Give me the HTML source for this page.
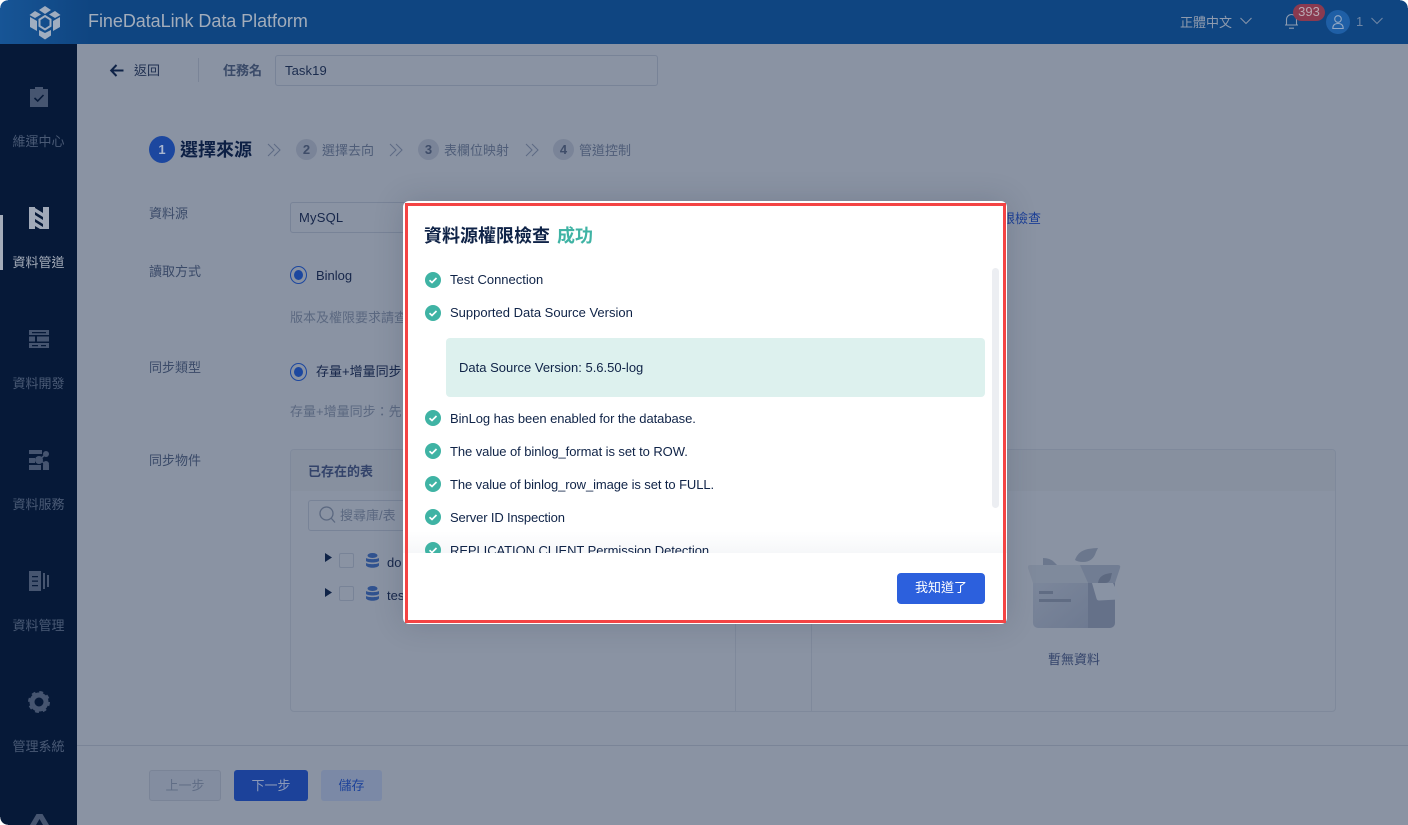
<!DOCTYPE html>
<html lang="zh-Hant">
<head>
<meta charset="utf-8">
<title>FineDataLink</title>
<style>
html,body{margin:0;padding:0;background:#fff;}
#r{position:relative;width:1408px;height:825px;overflow:hidden;background:#8a93a3;font-family:"Liberation Sans","WenQuanYi Zen Hei","Noto Sans CJK TC",sans-serif;font-size:13px;color:#0f2347;}
.t{position:absolute;white-space:nowrap;line-height:20px;margin-top:1px;}
.b{position:absolute;box-sizing:border-box;}
svg{position:absolute;overflow:visible;}
.nav{color:#4a5a75;left:0;width:77px;text-align:center;}
.lab{color:#3a4a68;left:149px;}
.hint{color:#5b6880;}
.li{left:450px;color:#0f2347;}
</style>
</head>
<body>
<div id="r">
  <!-- header -->
  <div class="b" style="left:0;top:0;width:1408px;height:44px;background:linear-gradient(90deg,#175596 0,#0f4581 90px,#0f4581 100%);"></div>
  <svg style="left:24px;top:2px" width="42" height="40" viewBox="24 2 42 40">
    <g fill="#a0adbf">
      <polygon points="45,6 51,10 45,14 39,10"/>
      <polygon points="35,11 41,14.500 35,18 29.500,15"/>
      <polygon points="55,11 60.500,15 55,18 49,14.500"/>
      <polygon points="30,17 37,21 37,31 30,27"/>
      <polygon points="60,17 60,27 53,31 53,21"/>
      <polygon points="39,30 45,33 51,30 51,35.500 45,39.500 39,35.500"/>
    </g>
    <polygon points="45,16 50.500,19.500 50.500,26 45,29.500 39.500,26 39.500,19.500" fill="none" stroke="#a0adbf" stroke-width="2"/>
  </svg>
  <div class="t" style="left:88px;top:10px;font-size:18px;color:#a3adbb;letter-spacing:-.05px;">FineDataLink Data Platform</div>
  <div class="t" style="left:1180px;top:12px;color:#8f9bae;">正體中文</div>
  <svg style="left:1240px;top:17px" width="12" height="8"><path d="M.5 1 6 6.500 11.500 1" fill="none" stroke="#8493a8" stroke-width="1.100"/></svg>
  <svg style="left:1284px;top:13px" width="15" height="16"><path d="M1 12h13M2.500 12V6.500a5 5 0 0 1 10 0V12M5 15.200h5" fill="none" stroke="#8d9bb0" stroke-width="1.100"/></svg>
  <div class="b" style="left:1293px;top:4px;width:32px;height:17px;border-radius:9px;background:#8a3a50;"></div>
  <div class="t" style="left:1293px;top:2px;width:32px;text-align:center;color:#b9a9b3;font-size:13px;line-height:18px;">393</div>
  <div class="b" style="left:1326px;top:10px;width:24px;height:24px;border-radius:50%;background:#1f5fa6;"></div>
  <svg style="left:1332px;top:15px" width="12" height="15"><circle cx="6" cy="4" r="3.300" fill="none" stroke="#93a8c4" stroke-width="1.100"/><path d="M.8 13.500c0-3.500 2-5 5.200-5s5.200 1.500 5.200 5z" fill="none" stroke="#93a8c4" stroke-width="1.100"/></svg>
  <div class="t" style="left:1356px;top:11px;color:#6f86a5;">1</div>
  <svg style="left:1371px;top:17px" width="12" height="8"><path d="M.5 1 6 6.500 11.500 1" fill="none" stroke="#6f86a5" stroke-width="1.100"/></svg>

  <!-- sidebar -->
  <div class="b" style="left:0;top:44px;width:77px;height:781px;background:#061938;"></div>
  <div class="b" style="left:0;top:215px;width:3px;height:55px;background:#a4acb9;"></div>

  <svg style="left:30px;top:87px" width="18" height="20"><path d="M0 2h5V0h8v2h5v18H0z" fill="#465570"/><path d="M4.500 11l3.200 3L13.500 8" fill="none" stroke="#061938" stroke-width="1.600"/></svg>
  <div class="t nav" style="top:131px;">維運中心</div>

  <svg style="left:29px;top:207px" width="20" height="22"><path d="M0 0h6v22H0zM14 0h6v22h-6z" fill="#a0a9b8"/><path d="M6 1l8 5v4L6 5zM6 8l8 5v4L6 12zM6 15l8 5v2h-3l-5-3z" fill="#a0a9b8"/></svg>
  <div class="t nav" style="top:252px;color:#a4acb9;">資料管道</div>

  <svg style="left:29px;top:330px" width="20" height="18" fill="#465570"><path d="M0 0h20v5H0zM0 6.500h6v5H0zM8 6.500h12v5H8zM0 13h20v5H0z"/><path d="M3 2h14v1.200H3zM3 15h6v1.200H3zM12 15h5v1.200h-5z" fill="#061938"/></svg>
  <div class="t nav" style="top:373px;">資料開發</div>

  <svg style="left:29px;top:450px" width="20" height="20" fill="#465570"><path d="M0 0h13v4H0zM0 8h6v5H0zM0 15h12v5H0zM14 15h6v5h-6z"/><circle cx="10" cy="10" r="4"/><circle cx="17" cy="4" r="3"/><circle cx="17" cy="14" r="3"/><path d="M10 10 17 4M10 10l7 4" stroke="#465570" stroke-width="1.500"/></svg>
  <div class="t nav" style="top:494px;">資料服務</div>

  <svg style="left:29px;top:571px" width="20" height="20" fill="#465570"><path d="M0 0h12v20H0zM14 2h2v16h-2zM18 4h2v12h-2z"/><path d="M3 5h6v1.300H3zM3 9.500h6v1.300H3zM3 14h6v1.300H3z" fill="#061938"/></svg>
  <div class="t nav" style="top:615px;">資料管理</div>

  <svg style="left:28px;top:691px" width="22" height="22"><circle cx="11" cy="11" r="7" fill="none" stroke="#465570" stroke-width="5"/><circle cx="11" cy="11" r="9" fill="none" stroke="#465570" stroke-width="4" stroke-dasharray="3.500 3.570"/></svg>
  <div class="t nav" style="top:736px;">管理系統</div>

  <svg style="left:30px;top:814px" width="19" height="11"><path d="M6.500 0h6l6.500 11h-6L9.500 5 6 11H0z" fill="#465570"/></svg>
  <div class="b" style="left:0;top:817px;width:8px;height:8px;background:radial-gradient(circle at 100% 0,transparent 7.500px,#fff 8px);"></div>
  <div class="b" style="left:0;top:0;width:8px;height:8px;background:radial-gradient(circle at 100% 100%,transparent 7.500px,#fff 8px);"></div>
  <div class="b" style="left:1400px;top:0;width:8px;height:8px;background:radial-gradient(circle at 0 100%,transparent 7.500px,#fff 8px);"></div>

  <!-- top bar -->
  <svg style="left:110px;top:64px" width="14" height="13"><path d="M13.500 6.500H1.500M6.500 1 1.200 6.500 6.500 12" fill="none" stroke="#0f2347" stroke-width="2"/></svg>
  <div class="t" style="left:134px;top:60px;color:#1f2f50;">返回</div>
  <div class="b" style="left:198px;top:58px;width:1px;height:24px;background:#7a8497;"></div>
  <div class="t" style="left:223px;top:60px;color:#3a4a68;font-weight:bold;">任務名</div>
  <div class="b" style="left:275px;top:55px;width:383px;height:31px;border:1px solid #788397;border-radius:3px;"></div>
  <div class="t" style="left:285px;top:60px;color:#1a2b4d;letter-spacing:.1px;">Task19</div>

  <!-- steps -->
  <div class="b" style="left:149px;top:136px;width:26px;height:27px;border-radius:50%;background:#1c479f;"></div>
  <div class="t" style="left:149px;top:139px;width:26px;text-align:center;color:#a9b6cf;font-weight:bold;font-size:13px;">1</div>
  <div class="t" style="left:180px;top:139px;font-size:18px;font-weight:bold;color:#0c1f44;">選擇來源</div>
  <svg style="left:267px;top:143px" width="14" height="14"><path d="M1 1l6 6-6 6M7 1l6 6-6 6" fill="none" stroke="#5d6a84" stroke-width="1"/></svg>
  <div class="b" style="left:296px;top:139px;width:21px;height:21px;border-radius:50%;background:#7a8498;"></div>
  <div class="t" style="left:296px;top:139px;width:21px;text-align:center;color:#3f4d69;font-weight:bold;">2</div>
  <div class="t" style="left:322px;top:140px;color:#4f5d78;">選擇去向</div>
  <svg style="left:389px;top:143px" width="14" height="14"><path d="M1 1l6 6-6 6M7 1l6 6-6 6" fill="none" stroke="#5d6a84" stroke-width="1"/></svg>
  <div class="b" style="left:418px;top:139px;width:21px;height:21px;border-radius:50%;background:#7a8498;"></div>
  <div class="t" style="left:418px;top:139px;width:21px;text-align:center;color:#3f4d69;font-weight:bold;">3</div>
  <div class="t" style="left:444px;top:140px;color:#4f5d78;">表欄位映射</div>
  <svg style="left:525px;top:143px" width="14" height="14"><path d="M1 1l6 6-6 6M7 1l6 6-6 6" fill="none" stroke="#5d6a84" stroke-width="1"/></svg>
  <div class="b" style="left:553px;top:139px;width:21px;height:21px;border-radius:50%;background:#7a8498;"></div>
  <div class="t" style="left:553px;top:139px;width:21px;text-align:center;color:#3f4d69;font-weight:bold;">4</div>
  <div class="t" style="left:579px;top:140px;color:#4f5d78;">管道控制</div>

  <!-- form -->
  <div class="t lab" style="top:203px;">資料源</div>
  <div class="b" style="left:290px;top:202px;width:160px;height:31px;border:1px solid #788397;border-radius:3px;"></div>
  <div class="t" style="left:299px;top:207px;color:#16264a;letter-spacing:.2px;">MySQL</div>
  <div class="t" style="left:1002px;top:208px;color:#1c3f96;">限檢查</div>

  <div class="t lab" style="top:261px;">讀取方式</div>
  <div class="b" style="left:290px;top:266px;width:17px;height:18px;border-radius:50%;border:1px solid #1c479f;"></div>
  <div class="b" style="left:294px;top:270px;width:9px;height:10px;border-radius:50%;background:#1c479f;"></div>
  <div class="t" style="left:316px;top:265px;color:#16264a;">Binlog</div>
  <div class="t hint" style="left:290px;top:307px;">版本及權限要求請查</div>

  <div class="t lab" style="top:357px;">同步類型</div>
  <div class="b" style="left:290px;top:363px;width:17px;height:18px;border-radius:50%;border:1px solid #1c479f;"></div>
  <div class="b" style="left:294px;top:367px;width:9px;height:10px;border-radius:50%;background:#1c479f;"></div>
  <div class="t" style="left:316px;top:361px;color:#16264a;">存量+增量同步</div>
  <div class="t hint" style="left:290px;top:401px;">存量+增量同步：先</div>

  <div class="t lab" style="top:450px;">同步物件</div>

  <!-- panels -->
  <div class="b" style="left:290px;top:449px;width:1046px;height:263px;border:1px solid #7f899b;border-radius:4px;"></div>
  <div class="b" style="left:291px;top:450px;width:444px;height:41px;background:#87909f;border-radius:3px 0 0 0;"></div>
  <div class="b" style="left:812px;top:450px;width:523px;height:41px;background:#87909f;border-radius:0 3px 0 0;"></div>
  <div class="b" style="left:735px;top:449px;width:1px;height:263px;background:#7f899b;"></div>
  <div class="b" style="left:811px;top:449px;width:1px;height:263px;background:#7f899b;"></div>
  <div class="t" style="left:308px;top:461px;color:#33436a;font-weight:bold;">已存在的表</div>
  <div class="b" style="left:308px;top:500px;width:120px;height:31px;border:1px solid #788397;border-radius:3px;"></div>
  <svg style="left:319px;top:506px" width="17" height="18"><circle cx="7.500" cy="7.500" r="6.500" fill="none" stroke="#5b6880" stroke-width="1.300"/><path d="M12 12l4 4.500" stroke="#5b6880" stroke-width="1.300"/></svg>
  <div class="t hint" style="left:340px;top:505px;">搜尋庫/表</div>

  <svg style="left:325px;top:553px" width="7" height="9"><path d="M0 0l7 4.500L0 9z" fill="#0f2347"/></svg>
  <div class="b" style="left:339px;top:553px;width:15px;height:15px;border:1px solid #788397;border-radius:2px;"></div>
  <svg style="left:366px;top:553px" width="13" height="15" fill="#30528f"><ellipse cx="6.500" cy="2.500" rx="5" ry="2.500"/><path d="M0 5c2 1.500 11 1.500 13 0v3c-2 2-11 2-13 0zM0 10c2 1.500 11 1.500 13 0v2.500c-2 3-11 3-13 0z"/></svg>
  <div class="t" style="left:387px;top:552px;color:#16264a;">do</div>

  <svg style="left:325px;top:588px" width="7" height="9"><path d="M0 0l7 4.500L0 9z" fill="#0f2347"/></svg>
  <div class="b" style="left:339px;top:586px;width:15px;height:15px;border:1px solid #788397;border-radius:2px;"></div>
  <svg style="left:366px;top:586px" width="13" height="15" fill="#30528f"><ellipse cx="6.500" cy="2.500" rx="5" ry="2.500"/><path d="M0 5c2 1.500 11 1.500 13 0v3c-2 2-11 2-13 0zM0 10c2 1.500 11 1.500 13 0v2.500c-2 3-11 3-13 0z"/></svg>
  <div class="t" style="left:387px;top:585px;color:#16264a;">tes</div>

  <!-- empty illustration -->
  <svg style="left:1020px;top:545px" width="105" height="90" viewBox="1020 545 105 90">
    <defs><linearGradient id="g1" x1="0" y1="0" x2="1" y2="1"><stop offset="0" stop-color="#7c879b"/><stop offset="1" stop-color="#6e7a91"/></linearGradient></defs>
    <path d="M1033 583h55v45h-50a5 5 0 0 1-5-5z" fill="url(#g1)"/>
    <path d="M1088 583h27v40a5 5 0 0 1-5 5h-22z" fill="#657189"/>
    <path d="M1030 565h50l8 18h-55l-5-15q-.5-3 2-3z" fill="#7f8a9c"/>
    <path d="M1080 565h38q3 0 2 3l-5 15h-27z" fill="#717d93"/>
    <path d="M1092 583h21l7 14q.5 2-2 2.500l-19 1q-2 0-2.500-2z" fill="#8993a4"/>
    <path d="M1039 591h14v3h-14zM1039 599h32v3h-32z" fill="#606c83"/>
    <path d="M1075 560q3-9 13-11 6-1 10-1l-2 4q-3 10-13 10-5 0-8-2z" fill="#6b778d"/>
    <path d="M1043 558q7 0 11 4l3 3h-14z" fill="#6b778d"/>
    <path d="M1098 583q1-7 8-9 4-1 6-1l-1 4q-1 6-6 6z" fill="#5d6980"/>
  </svg>
  <div class="t" style="left:1048px;top:649px;color:#33436a;">暫無資料</div>

  <!-- footer -->
  <div class="b" style="left:77px;top:745px;width:1331px;height:1px;background:#7a8497;"></div>
  <div class="b" style="left:149px;top:770px;width:72px;height:31px;border:1px solid #7a8497;border-radius:3px;background:#838da0;"></div>
  <div class="t" style="left:149px;top:775px;width:72px;text-align:center;color:#616e86;">上一步</div>
  <div class="b" style="left:234px;top:770px;width:74px;height:31px;border-radius:3px;background:#1c429a;"></div>
  <div class="t" style="left:234px;top:775px;width:74px;text-align:center;color:#8d9ab8;">下一步</div>
  <div class="b" style="left:321px;top:770px;width:61px;height:31px;border-radius:3px;background:#7b89a6;"></div>
  <div class="t" style="left:321px;top:775px;width:61px;text-align:center;color:#1c429a;">儲存</div>

  <!-- dialog -->
  <div class="b" style="left:403px;top:201px;width:604px;height:423px;background:#fff;border-radius:6px;box-shadow:0 0 30px rgba(30,40,60,.18);overflow:hidden;isolation:isolate;">
    <div class="t" style="left:21px;top:21px;font-size:18px;font-weight:bold;color:#0f2347;line-height:26px;">資料源權限檢查</div>
    <div class="t" style="left:154px;top:21px;font-size:18px;font-weight:bold;color:#3fb3a4;line-height:26px;">成功</div>
    <div class="b" style="left:589px;top:67px;width:7px;height:240px;border-radius:4px;background:#eceef2;"></div>
    <div class="b" style="left:43px;top:137px;width:539px;height:59px;border-radius:4px;background:#ddf1ee;"></div>
    <div class="t" style="left:56px;top:156px;color:#0f2347;">Data Source Version: 5.6.50-log</div>
    <div class="b" style="left:0;top:330px;width:604px;height:22px;background:linear-gradient(rgba(246,247,249,0),#f6f7f9);"></div>
    <div class="b" style="left:494px;top:372px;width:88px;height:31px;border-radius:4px;background:#2c60dd;"></div>
    <div class="t" style="left:494px;top:376px;width:88px;text-align:center;color:#fff;">我知道了</div>
  </div>
  <div class="t li" style="top:269px;">Test Connection</div>
  <div class="t li" style="top:302px;">Supported Data Source Version</div>
  <div class="t li" style="top:408px;letter-spacing:-.07px;">BinLog has been enabled for the database.</div>
  <div class="t li" style="top:441px;letter-spacing:-.07px;">The value of binlog_format is set to ROW.</div>
  <div class="t li" style="top:474px;letter-spacing:-.09px;">The value of binlog_row_image is set to FULL.</div>
  <div class="t li" style="top:507px;letter-spacing:-.15px;">Server ID Inspection</div>
  <svg style="left:425px;top:272px" width="16" height="16"><circle cx="8" cy="8" r="8" fill="#3fb3a4"/><path d="M4.500 8.200 7 10.500l4.500-4.500" fill="none" stroke="#fff" stroke-width="1.700"/></svg>
  <svg style="left:425px;top:305px" width="16" height="16"><circle cx="8" cy="8" r="8" fill="#3fb3a4"/><path d="M4.500 8.200 7 10.500l4.500-4.500" fill="none" stroke="#fff" stroke-width="1.700"/></svg>
  <svg style="left:425px;top:410px" width="16" height="16"><circle cx="8" cy="8" r="8" fill="#3fb3a4"/><path d="M4.500 8.200 7 10.500l4.500-4.500" fill="none" stroke="#fff" stroke-width="1.700"/></svg>
  <svg style="left:425px;top:443px" width="16" height="16"><circle cx="8" cy="8" r="8" fill="#3fb3a4"/><path d="M4.500 8.200 7 10.500l4.500-4.500" fill="none" stroke="#fff" stroke-width="1.700"/></svg>
  <svg style="left:425px;top:476px" width="16" height="16"><circle cx="8" cy="8" r="8" fill="#3fb3a4"/><path d="M4.500 8.200 7 10.500l4.500-4.500" fill="none" stroke="#fff" stroke-width="1.700"/></svg>
  <svg style="left:425px;top:509px" width="16" height="16"><circle cx="8" cy="8" r="8" fill="#3fb3a4"/><path d="M4.500 8.200 7 10.500l4.500-4.500" fill="none" stroke="#fff" stroke-width="1.700"/></svg>
  <div class="b" style="left:408px;top:530px;width:580px;height:23px;overflow:hidden;">
    <div class="t li" style="left:42px;top:10px;letter-spacing:-.07px;">REPLICATION CLIENT Permission Detection</div>
    <svg style="left:17px;top:12px" width="16" height="16"><circle cx="8" cy="8" r="8" fill="#3fb3a4"/><path d="M4.500 8.200 7 10.500l4.500-4.500" fill="none" stroke="#fff" stroke-width="1.700"/></svg>
  </div>
  <div class="b" style="left:405px;top:203px;width:601px;height:420px;border:3px solid #f44444;z-index:10;"></div>
</div>
</body>
</html>
